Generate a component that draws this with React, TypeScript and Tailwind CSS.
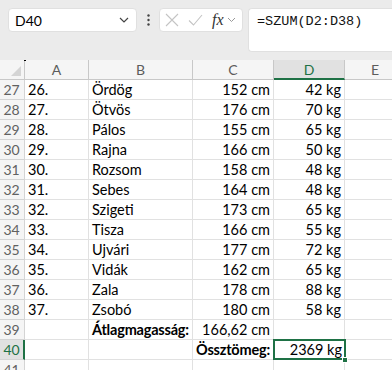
import React from "react";

const rows: [string, string, string, string, string][] = [
  ["27", "26.", "Ördög", "152 cm", "42 kg"],
  ["28", "27.", "Ötvös", "176 cm", "70 kg"],
  ["29", "28.", "Pálos", "155 cm", "65 kg"],
  ["30", "29.", "Rajna", "166 cm", "50 kg"],
  ["31", "30.", "Rozsom", "158 cm", "48 kg"],
  ["32", "31.", "Sebes", "164 cm", "48 kg"],
  ["33", "32.", "Szigeti", "173 cm", "65 kg"],
  ["34", "33.", "Tisza", "166 cm", "55 kg"],
  ["35", "34.", "Ujvári", "177 cm", "72 kg"],
  ["36", "35.", "Vidák", "162 cm", "65 kg"],
  ["37", "36.", "Zala", "178 cm", "88 kg"],
  ["38", "37.", "Zsobó", "180 cm", "58 kg"],
];

const cols = "grid grid-cols-[25px_64px_104px_81px_71px_1fr]";
const cell = "h-[20px] border-r border-b border-[#e1e1e1] bg-white px-[3px] leading-[19px] whitespace-nowrap overflow-visible";
const rowHead = "h-[20px] border-r border-b border-[#d4d4d4] bg-[#f5f5f5] text-[#616161] text-center leading-[19px] text-[14px] pr-[1px]";

export default function App() {
  return (
    <div
      className="w-[392px] h-[370px] overflow-hidden bg-[#ebebeb] text-[#000] text-[14.5px]"
      style={{ fontFamily: "Lato, 'Liberation Sans', sans-serif" }}
    >
      {/* toolbar */}
      <div className="h-[60px] flex items-start pt-[8px] pl-[8px] gap-0">
        <div className="w-[129px] h-[24px] bg-white rounded-[4px] border border-[#e0e0e0] flex items-center justify-between pl-[6px] pr-[7px] text-[14px]">
          <span>D40</span>
          <svg width="10" height="6" viewBox="0 0 10 6" fill="none">
            <path d="M1 1l4 4 4-4" stroke="#444" strokeWidth="1.2" />
          </svg>
        </div>
        <div className="w-[22px] h-[24px] flex items-center justify-center">
          <svg width="3" height="12" viewBox="0 0 3 12">
            <circle cx="1.5" cy="1.5" r="1.2" fill="#444" />
            <circle cx="1.5" cy="6" r="1.2" fill="#444" />
            <circle cx="1.5" cy="10.5" r="1.2" fill="#444" />
          </svg>
        </div>
        <div className="w-[84px] h-[24px] bg-white rounded-[4px] border border-[#e0e0e0] flex items-center pl-[5px]">
          <svg width="14" height="14" viewBox="0 0 14 14" fill="none">
            <path d="M1 1l12 12M13 1L1 13" stroke="#c4c4c4" strokeWidth="1.1" />
          </svg>
          <svg className="ml-[9px]" width="15" height="12" viewBox="0 0 15 12" fill="none">
            <path d="M1 6.5l4.5 4.5L14 1" stroke="#c4c4c4" strokeWidth="1.1" />
          </svg>
          <span
            className="ml-[9px] text-[16px] italic leading-none text-[#333]"
            style={{ fontFamily: "'Liberation Serif', 'DejaVu Serif', serif" }}
          >
            fx
          </span>
          <svg className="ml-[3px]" width="9" height="6" viewBox="0 0 9 6" fill="none">
            <path d="M1 1l3.5 3.5L8 1" stroke="#999" strokeWidth="1" />
          </svg>
        </div>
        <div
          className="ml-[5px] flex-1 h-[44px] bg-white rounded-tl-[4px] rounded-bl-[4px] border border-r-0 border-[#e0e0e0] pl-[8px] pt-[3px] text-[13.5px] text-[#111]"
          style={{ fontFamily: "'Liberation Mono', 'DejaVu Sans Mono', monospace" }}
        >
          =SZUM(D2:D38)
        </div>
      </div>

      {/* header row */}
      <div className={`${cols} relative`}>
        <div className="h-[20px] border-r border-b border-[#c8c8c8] bg-[#f5f5f5] relative">
          <svg className="absolute right-[3px] bottom-[3px]" width="10" height="10" viewBox="0 0 10 10">
            <path d="M10 0L10 10L0 10Z" fill="#d4d4d4" />
          </svg>
        </div>
        {["A", "B", "C"].map((l) => (
          <div key={l} className="h-[20px] border-r border-b border-[#c8c8c8] bg-[#f5f5f5] text-center text-[#5c5c5c] text-[14px] leading-[19px]">
            {l}
          </div>
        ))}
        <div className="h-[20px] border-r border-[#c8c8c8] border-b-2 border-b-[#1e7145] bg-[#e1e1e1] text-center text-[#1e7145] text-[14px] leading-[19px]">
          D
        </div>
        <div className="h-[20px] border-b border-[#c8c8c8] bg-[#f5f5f5] text-left pl-[26px] text-[#5c5c5c] text-[14px] leading-[19px]">
          E
        </div>
        <div className="absolute left-[24px] top-0 w-[2px] h-[1px] bg-black" />
      </div>

      {rows.map((r) => (
        <div key={r[0]} className={cols}>
          <div className={rowHead}>{r[0]}</div>
          <div className={cell}>{r[1]}</div>
          <div className={cell}>{r[2]}</div>
          <div className={`${cell} text-right`}>{r[3]}</div>
          <div className={`${cell} text-right`}>{r[4]}</div>
          <div className="h-[20px] border-b border-[#e1e1e1] bg-white" />
        </div>
      ))}

      <div className={cols}>
        <div className={rowHead}>39</div>
        <div className={cell}></div>
        <div className={`${cell} font-bold tracking-[-0.2px]`}>Átlagmagasság:</div>
        <div className={`${cell} text-right`}>166,62 cm</div>
        <div className={cell}></div>
        <div className="h-[20px] border-b border-[#e1e1e1] bg-white" />
      </div>

      <div className={cols}>
        <div className="h-[20px] border-r-2 border-r-[#1e7145] border-b border-[#d4d4d4] bg-[#e1e1e1] text-[#1e7145] text-center leading-[19px] text-[14px]">40</div>
        <div className={cell}></div>
        <div className={cell}></div>
        <div className={`${cell} font-bold tracking-[-0.2px]`}>Össztömeg:</div>
        <div className="h-[20px] bg-white relative">
          <div className="absolute left-[-1px] top-[-1px] right-[-1px] bottom-[0px] border-2 border-[#1e7145] text-right pr-[2px] leading-[17px] whitespace-nowrap">
            2369 kg
          </div>
          <div className="absolute right-[-3px] bottom-[-3px] w-[6px] h-[6px] bg-[#1e7145] border border-white" />
        </div>
        <div className="h-[20px] border-b border-[#e1e1e1] bg-white" />
      </div>

      <div className={cols}>
        <div className={rowHead}>41</div>
        <div className={cell}></div>
        <div className={cell}></div>
        <div className={cell}></div>
        <div className={cell}></div>
        <div className="h-[20px] border-b border-[#e1e1e1] bg-white" />
      </div>
    </div>
  );
}
